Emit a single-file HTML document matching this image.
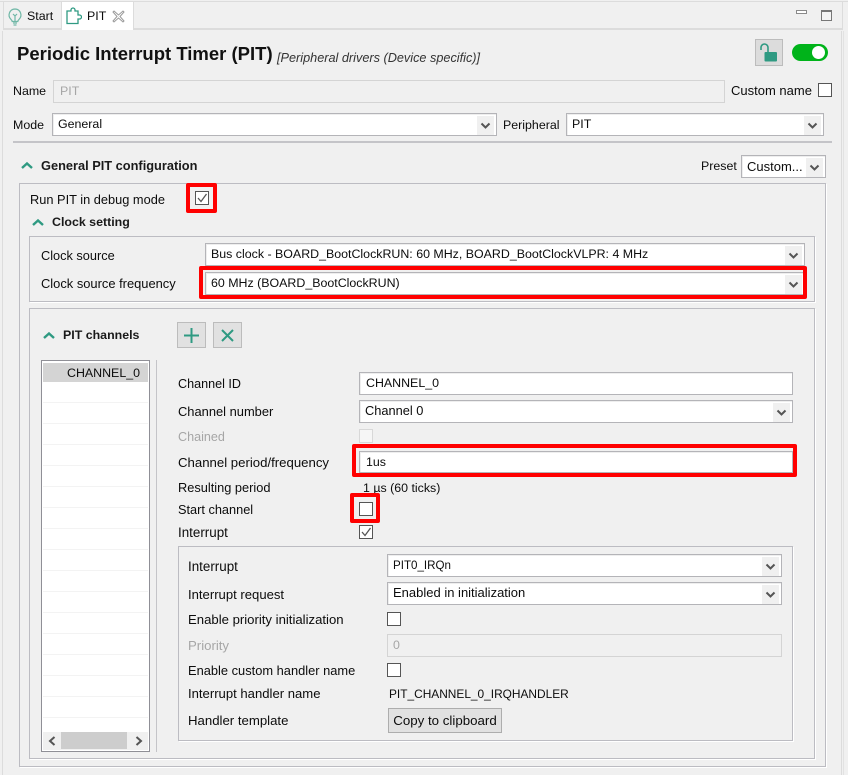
<!DOCTYPE html>
<html><head><meta charset="utf-8"><style>
html,body{margin:0;padding:0}
body{width:848px;height:775px;position:relative;overflow:hidden;background:#f0f0f0;font-family:"Liberation Sans",sans-serif;font-size:12.4px;color:#0c0c0c}
.a,.t,.b,.s,.c,.r{position:absolute;box-sizing:border-box}
.t{white-space:nowrap;line-height:16px;height:16px}
.b{border:1px solid #bcbcc2;box-shadow:1px 1px 0 #fff}
.s{background:#fff;border:1px solid #b4b4b8;box-shadow:inset 1px 1px 0 #eee;height:23px;line-height:21px;padding-left:5px;white-space:nowrap}
.s svg{position:absolute;right:2px;top:2px;background:#f0f0f0}
.c{width:14px;height:14px;background:#fff;border:1px solid #555}
.r{border:4px solid #f00;border-radius:2px}
.g{color:#a6a6a6}
.h{font-weight:bold;color:#1a1a1a}
.chev{position:absolute}
</style></head><body>
<div class="a" style="left:0;top:1px;width:848px;height:1px;background:#dcdcdc"></div>
<div class="a" style="left:3px;top:1px;width:1px;height:28px;background:#dcdcdc"></div>
<div class="a" style="left:842px;top:1px;width:1px;height:28px;background:#dcdcdc"></div>
<div class="a" style="left:3px;top:28px;width:840px;height:2px;background:#dcdcdc"></div>
<div class="a" style="left:61px;top:2px;width:73px;height:28px;background:#fff;border-left:1px solid #dcdcdc;border-right:1px solid #dcdcdc;box-sizing:border-box"></div>
<svg class="a" style="left:7px;top:8px" width="16" height="18" viewBox="0 0 16 18" fill="none" stroke="#6fb7a6" stroke-width="1.2"><path d="M8 1a6 6 0 0 0-4 10.4c.8.8 1.2 1.4 1.2 2.1h5.6c0-.7.4-1.3 1.2-2.1A6 6 0 0 0 8 1z"/><path d="M6 15h4M6.500 17h3M8 13V8L6 6M8 8l2-2"/></svg>
<div class="t" style="left:27px;top:8px">Start</div>
<svg class="a" style="left:66px;top:7px" width="16" height="18" viewBox="0 0 16 18" fill="none" stroke="#2f9a82" stroke-width="1.3"><path d="M1 4h4V3a2 2 0 0 1 4 0v1h3v4h1.500a2 2 0 0 1 0 4H12v4.500H1z"/></svg>
<div class="t" style="left:87px;top:8px">PIT</div>
<svg class="a" style="left:112px;top:10px" width="13" height="13" viewBox="0 0 13 13" fill="#fff" stroke="#9a9a9a"><path d="M2 1l4.500 4L11 1l1 1-4 4.500 4 4.500-1 1-4.500-4L2 12l-1-1 4-4.500L1 2z"/></svg>
<div class="a" style="left:796px;top:10px;width:11px;height:4px;border:1px solid #8a8a8a;box-sizing:border-box;background:#fff"></div>
<div class="a" style="left:821px;top:10px;width:11px;height:11px;border:1px solid #777;border-top-width:2px;box-sizing:border-box;background:#f4f4f4"></div>

<div class="a" style="left:2px;top:31px;width:1px;height:744px;background:#dcdcdc"></div>
<div class="a" style="left:841px;top:31px;width:1px;height:744px;background:#dcdcdc"></div>
<div class="a" style="left:843px;top:31px;width:1px;height:744px;background:#e2e2e2"></div>

<div class="t" style="left:17px;top:44px;height:20px;line-height:20px;font-size:18.500px;font-weight:bold;color:#111">Periodic Interrupt Timer (PIT)</div>
<div class="t" style="left:277px;top:50px;font-style:italic;font-size:12.700px;color:#333">[Peripheral drivers (Device specific)]</div>
<div class="a" style="left:755px;top:39px;width:28px;height:27px;background:#dcdcdc;border:1px solid #bcbcbc;box-sizing:border-box"></div>
<svg class="a" style="left:759px;top:43px" width="20" height="20" viewBox="0 0 20 20"><path d="M2 7V4.500a3.500 3.500 0 0 1 7 0V9" fill="none" stroke="#2f9a82" stroke-width="1.600"/><rect x="5.500" y="9" width="12.500" height="9.500" rx="1" fill="#2f9a82"/></svg>
<div class="a" style="left:792px;top:44px;width:36px;height:17px;border-radius:9px;background:#00b31a"></div>
<div class="a" style="left:812px;top:46px;width:13px;height:13px;border-radius:50%;background:#fff"></div>

<div class="t" style="left:13px;top:83px">Name</div>
<div class="s g" style="left:53px;top:80px;width:672px;background:#f0f0f0;border-color:#d4d4d4;box-shadow:none;padding-left:6px;line-height:20px">PIT</div>
<div class="t" style="left:731px;top:83px;font-size:13px">Custom name</div>
<div class="c" style="left:818px;top:83px"></div>

<div class="t" style="left:13px;top:117px">Mode</div>
<div class="s" style="left:52px;top:113px;width:445px">General<svg width="17" height="19" viewBox="0 0 17 19"><path d="M4.500 7.500l4 4 4-4" fill="none" stroke="#555" stroke-width="2"/></svg></div>
<div class="t" style="left:503px;top:117px">Peripheral</div>
<div class="s" style="left:566px;top:113px;width:258px">PIT<svg width="17" height="19" viewBox="0 0 17 19"><path d="M4.500 7.500l4 4 4-4" fill="none" stroke="#555" stroke-width="2"/></svg></div>
<div class="a" style="left:13px;top:141px;width:819px;height:2px;background:#c4c4c8"></div>

<svg class="chev" style="left:20px;top:161px" width="14" height="9" viewBox="0 0 14 9"><path d="M2 7l5-4.500L12 7" fill="none" stroke="#2f9a82" stroke-width="2.400"/></svg>
<div class="t h" style="left:41px;top:158px;font-size:12.800px">General PIT configuration</div>
<div class="t" style="left:701px;top:158px">Preset</div>
<div class="s" style="left:741px;top:155px;width:85px;font-size:13px">Custom...<svg width="17" height="19" viewBox="0 0 17 19"><path d="M4.500 7.500l4 4 4-4" fill="none" stroke="#555" stroke-width="2"/></svg></div>

<div class="b" style="left:19px;top:183px;width:807px;height:584px"></div>
<div class="t" style="left:30px;top:192px;font-size:12.800px">Run PIT in debug mode</div>
<div class="r" style="left:186px;top:183px;width:31px;height:30px"></div>
<div class="c" style="left:195px;top:191px"><svg style="position:absolute;left:0;top:0" width="12" height="12" viewBox="0 0 12 12"><path d="M2 6l3 3.500L10.500 2" fill="none" stroke="#555" stroke-width="1.300"/></svg></div>
<svg class="chev" style="left:31px;top:218px" width="14" height="9" viewBox="0 0 14 9"><path d="M2 7l5-4.500L12 7" fill="none" stroke="#2f9a82" stroke-width="2.400"/></svg>
<div class="t h" style="left:52px;top:214px">Clock setting</div>

<div class="b" style="left:29px;top:236px;width:786px;height:66px"></div>
<div class="t" style="left:41px;top:248px;font-size:12.750px">Clock source</div>
<div class="s" style="left:205px;top:243px;width:600px">Bus clock - BOARD_BootClockRUN: 60 MHz, BOARD_BootClockVLPR: 4 MHz<svg width="17" height="19" viewBox="0 0 17 19"><path d="M4.500 7.500l4 4 4-4" fill="none" stroke="#555" stroke-width="2"/></svg></div>
<div class="t" style="left:41px;top:276px;font-size:12.900px">Clock source frequency</div>
<div class="s" style="left:205px;top:272px;width:600px">60 MHz (BOARD_BootClockRUN)<svg width="17" height="19" viewBox="0 0 17 19"><path d="M4.500 7.500l4 4 4-4" fill="none" stroke="#555" stroke-width="2"/></svg></div>
<div class="r" style="left:199px;top:266px;width:608px;height:33px"></div>

<div class="b" style="left:29px;top:308px;width:786px;height:451px"></div>
<svg class="chev" style="left:42px;top:331px" width="14" height="9" viewBox="0 0 14 9"><path d="M2 7l5-4.500L12 7" fill="none" stroke="#2f9a82" stroke-width="2.400"/></svg>
<div class="t h" style="left:63px;top:327px">PIT channels</div>
<div class="a" style="left:177px;top:322px;width:29px;height:26px;background:#e1e1e1;border:1px solid #bcbcbc;box-sizing:border-box"></div>
<svg class="a" style="left:183px;top:327px" width="17" height="17" viewBox="0 0 17 17"><path d="M8.500 1v15M1 8.500h15" stroke="#2f9a82" stroke-width="2"/></svg>
<div class="a" style="left:213px;top:322px;width:29px;height:26px;background:#e1e1e1;border:1px solid #bcbcbc;box-sizing:border-box"></div>
<svg class="a" style="left:221px;top:329px" width="13" height="13" viewBox="0 0 13 13"><path d="M1 1l11 11M12 1L1 12" stroke="#2f9a82" stroke-width="2"/></svg>

<div class="a" style="left:41px;top:360px;width:109px;height:392px;background:#fff;border:1px solid #8f8f96;box-sizing:border-box"></div>
<div class="a" style="left:43px;top:363px;width:105px;height:19px;background:#d4d4d4"></div>
<div class="t" style="left:67px;top:365px">CHANNEL_0</div>
<div class="a" style="left:43px;top:382px;width:105px;height:350px;background:repeating-linear-gradient(to bottom,#fff 0,#fff 20px,#f3f3f3 20px,#f3f3f3 21px)"></div>
<div class="a" style="left:43px;top:732px;width:105px;height:18px;background:#f0f0f0"></div>
<div class="a" style="left:61px;top:732px;width:66px;height:17px;background:#cdcdcd"></div>
<svg class="a" style="left:47px;top:735px" width="10" height="12" viewBox="0 0 10 12"><path d="M7.500 2L3 6l4.500 4" fill="none" stroke="#555" stroke-width="2"/></svg>
<svg class="a" style="left:134px;top:735px" width="10" height="12" viewBox="0 0 10 12"><path d="M2.500 2L7 6l-4.500 4" fill="none" stroke="#555" stroke-width="2"/></svg>
<div class="a" style="left:156px;top:360px;width:1px;height:392px;background:#c4c4c8"></div>

<div class="t" style="left:178px;top:376px;font-size:12.600px">Channel ID</div>
<div class="s" style="left:359px;top:372px;width:434px;padding-left:6px">CHANNEL_0</div>
<div class="t" style="left:178px;top:404px;font-size:12.900px">Channel number</div>
<div class="s" style="left:359px;top:400px;width:434px;font-size:12.800px;line-height:20px">Channel 0<svg width="17" height="19" viewBox="0 0 17 19"><path d="M4.500 7.500l4 4 4-4" fill="none" stroke="#555" stroke-width="2"/></svg></div>
<div class="t g" style="left:178px;top:429px;font-size:12.600px">Chained</div>
<div class="c" style="left:359px;top:429px;border-color:#d8d8d8;background:#f6f6f6"></div>
<div class="t" style="left:178px;top:455px;font-size:13.200px">Channel period/frequency</div>
<div class="s" style="left:359px;top:451px;width:434px;height:22px;padding-left:6px;line-height:20px">1us</div>
<div class="r" style="left:352px;top:444px;width:445px;height:33px"></div>
<div class="t" style="left:178px;top:480px;font-size:12.800px">Resulting period</div>
<div class="t" style="left:363px;top:480px">1 µs (60 ticks)</div>
<div class="t" style="left:178px;top:502px;font-size:12.750px">Start channel</div>
<div class="c" style="left:359px;top:502px"></div>
<div class="r" style="left:350px;top:493px;width:30px;height:30px"></div>
<div class="t" style="left:178px;top:525px;font-size:13.400px">Interrupt</div>
<div class="c" style="left:359px;top:525px"><svg style="position:absolute;left:0;top:0" width="12" height="12" viewBox="0 0 12 12"><path d="M2 6l3 3.500L10.500 2" fill="none" stroke="#555" stroke-width="1.300"/></svg></div>

<div class="b" style="left:178px;top:546px;width:615px;height:195px"></div>
<div class="t" style="left:188px;top:559px;font-size:13.400px">Interrupt</div>
<div class="s" style="left:387px;top:554px;width:395px;font-size:11.600px">PIT0_IRQn<svg width="17" height="19" viewBox="0 0 17 19"><path d="M4.500 7.500l4 4 4-4" fill="none" stroke="#555" stroke-width="2"/></svg></div>
<div class="t" style="left:188px;top:587px;font-size:13.100px">Interrupt request</div>
<div class="s" style="left:387px;top:582px;width:395px;font-size:13px;line-height:20px">Enabled in initialization<svg width="17" height="19" viewBox="0 0 17 19"><path d="M4.500 7.500l4 4 4-4" fill="none" stroke="#555" stroke-width="2"/></svg></div>
<div class="t" style="left:188px;top:612px;font-size:13.150px">Enable priority initialization</div>
<div class="c" style="left:387px;top:612px"></div>
<div class="t g" style="left:188px;top:638px;font-size:13.200px">Priority</div>
<div class="s g" style="left:387px;top:634px;width:395px;background:#f0f0f0;border-color:#d4d4d4;box-shadow:none;line-height:21px">0</div>
<div class="t" style="left:188px;top:663px;font-size:12.860px">Enable custom handler name</div>
<div class="c" style="left:387px;top:663px"></div>
<div class="t" style="left:188px;top:686px;font-size:13.100px">Interrupt handler name</div>
<div class="t" style="left:389px;top:686px;font-size:11.900px">PIT_CHANNEL_0_IRQHANDLER</div>
<div class="t" style="left:188px;top:713px;font-size:13.200px">Handler template</div>
<div class="a" style="left:388px;top:708px;width:114px;height:25px;background:#e1e1e1;border:1px solid #adadad;box-sizing:border-box;text-align:center;line-height:23px;font-size:13.300px">Copy to clipboard</div>
</body></html>
